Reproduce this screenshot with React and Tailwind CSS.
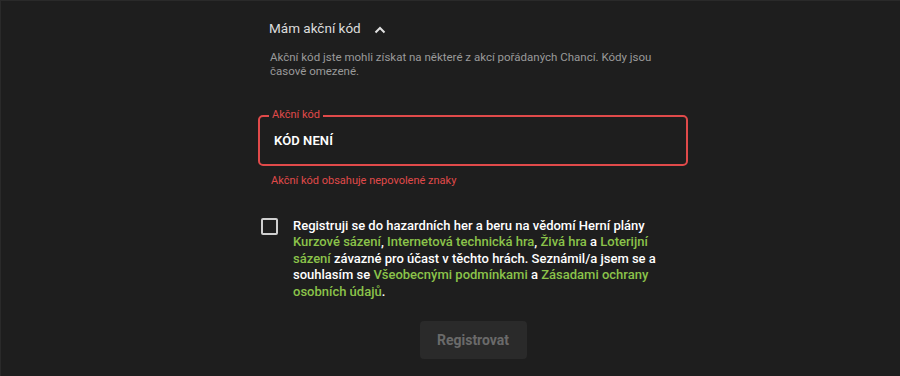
import React from "react";

export default function App() {
  const G = ({ children }) => <span className="text-[#8bc34a]">{children}</span>;
  return (
    <div className="w-[900px] h-[376px] bg-[#1e1e1e] border-t border-l border-[#2a2a2a] overflow-hidden" style={{ fontFamily: "Roboto, 'Noto Sans', sans-serif" }}>
      <div className="w-[430px] ml-[257px] flex flex-col">
        <div className="flex items-center pl-[11px] pt-[17px] h-[37px]">
          <span className="text-[13.5px] text-[#dcdcdc]">Mám akční kód</span>
          <svg className="ml-[13px] mt-[3px]" width="12" height="8" viewBox="0 0 12 8" fill="none">
            <path d="M1.5 6.5L6 2L10.5 6.5" stroke="#e0e0e0" strokeWidth="2" />
          </svg>
        </div>
        <p className="pl-[12px] pr-[24px] mt-[12px] text-[11.5px] leading-[14px] text-[#9a9a9a]">
          Akční kód jste mohli získat na některé z akcí pořádaných Chancí. Kódy jsou časově omezené.
        </p>
        <div className="relative mt-[37px] h-[51px] border-2 border-[#e04a4a] rounded-[5px] flex items-center pl-[14px]">
          <span className="absolute -top-[9px] left-[9px] px-[3px] bg-[#1e1e1e] text-[11px] leading-[14px] text-[#e04a4a]">Akční kód</span>
          <span className="text-[13px] font-semibold text-white tracking-[0.1px]">KÓD NENÍ</span>
        </div>
        <div className="pl-[13px] mt-[8px] text-[11px] leading-[14px] text-[#e04a4a]">Akční kód obsahuje nepovolené znaky</div>
        <div className="flex mt-[30px] pl-[3px]">
          <div className="w-[17px] h-[17px] border-2 border-[#cfcfcf] rounded-[2px] shrink-0" />
          <p className="ml-[15px] w-[376px] text-[13px] leading-[16.4px] font-medium text-white">
            Registruji se do hazardních her a beru na vědomí Herní plány <G>Kurzové sázení</G>, <G>Internetová technická hra</G>, <G>Živá hra</G> a <G>Loterijní sázení</G> závazné pro účast v těchto hrách. Seznámil/a jsem se a souhlasím se <G>Všeobecnými podmínkami</G> a <G>Zásadami ochrany osobních údajů</G>.
          </p>
        </div>
        <div className="flex justify-center mt-[21px]">
          <button className="w-[107px] h-[38px] rounded-[4px] bg-[#2a2a2a] text-[#6a6a6a] text-[14px] font-bold">Registrovat</button>
        </div>
      </div>
    </div>
  );
}
